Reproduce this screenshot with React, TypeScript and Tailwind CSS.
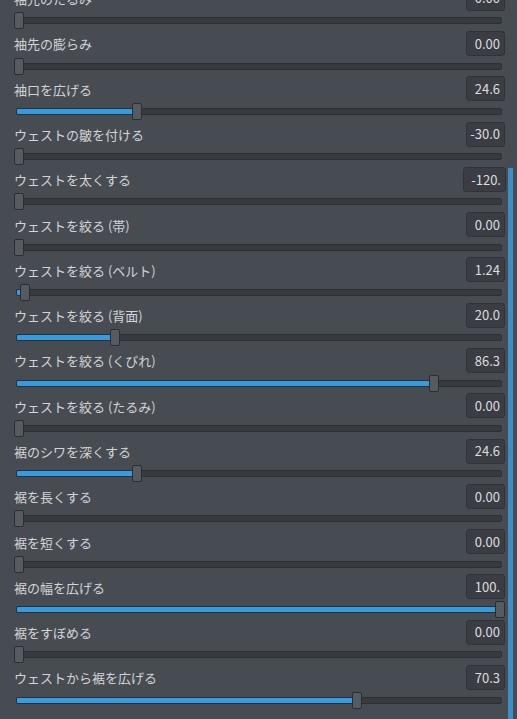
import React from "react";

type Row = { label: string; value: string; v: number; wide?: boolean };

const rows: Row[] = [
  { label: "袖先のたるみ", value: "0.00", v: 0 },
  { label: "袖先の膨らみ", value: "0.00", v: 0 },
  { label: "袖口を広げる", value: "24.6", v: 24.6 },
  { label: "ウェストの皺を付ける", value: "-30.0", v: -30 },
  { label: "ウェストを太くする", value: "-120.", v: -120, wide: true },
  { label: "ウェストを絞る (帯)", value: "0.00", v: 0 },
  { label: "ウェストを絞る (ベルト)", value: "1.24", v: 1.24 },
  { label: "ウェストを絞る (背面)", value: "20.0", v: 20 },
  { label: "ウェストを絞る (くびれ)", value: "86.3", v: 86.3 },
  { label: "ウェストを絞る (たるみ)", value: "0.00", v: 0 },
  { label: "裾のシワを深くする", value: "24.6", v: 24.6 },
  { label: "裾を長くする", value: "0.00", v: 0 },
  { label: "裾を短くする", value: "0.00", v: 0 },
  { label: "裾の幅を広げる", value: "100.", v: 100 },
  { label: "裾をすぼめる", value: "0.00", v: 0 },
  { label: "ウェストから裾を広げる", value: "70.3", v: 70.3 },
];

function SliderRow({ row }: { row: Row }) {
  const v = Math.max(0, Math.min(100, row.v));
  return (
    <div className="h-[45.29px] flex flex-col">
      <div className="h-[25px] flex items-center justify-between">
        <span className="text-[13px] text-[#d2d4d6] leading-none pt-[1px]">{row.label}</span>
        <div
          className={`${row.wide ? "w-[43px] mr-[-1px]" : "w-[39px]"} h-[25px] flex items-center justify-end pr-[4px] rounded-[3px] bg-[#3a3e44] border border-[#2f3338] text-[13px] text-[#dcdddf]`}
        >
          {row.value}
        </div>
      </div>
      <div className="h-[20.29px] relative flex items-center">
        <div className="ml-[2px] mr-[3px] flex-1 h-[7px] rounded-[2px] bg-[#373b40] border border-[#2c3035] relative">
          {v > 0 && (
            <div
              className="absolute left-[-1px] top-[-1px] h-[7px] bg-[#3d9ad8] border border-[#1e3446] rounded-l-[2px]"
              style={{ width: `${3 + v * 4.81}px` }}
            />
          )}
        </div>
        <div
          className="absolute top-[1.6px] w-[10px] h-[17px] rounded-[2px] bg-[#565b61] border border-[#2a2e33]"
          style={{ left: `${v * 4.81}px` }}
        />
      </div>
    </div>
  );
}

export default function App() {
  return (
    <div
      className="w-[517px] h-[719px] overflow-hidden bg-[#474c53] flex"
      style={{ fontFamily: '"Noto Sans CJK JP", "Noto Sans", sans-serif' }}
    >
      <div className="w-[506px] pl-[14px] pr-[1px]">
        <div className="mt-[-14.3px]">
          {rows.map((r, i) => (
            <SliderRow key={i} row={r} />
          ))}
        </div>
      </div>
      <div className="w-[11px] pl-[2px] pt-[168px]">
        <div className="w-[5px] h-[600px] bg-[#3b8ec8]" />
      </div>
    </div>
  );
}
